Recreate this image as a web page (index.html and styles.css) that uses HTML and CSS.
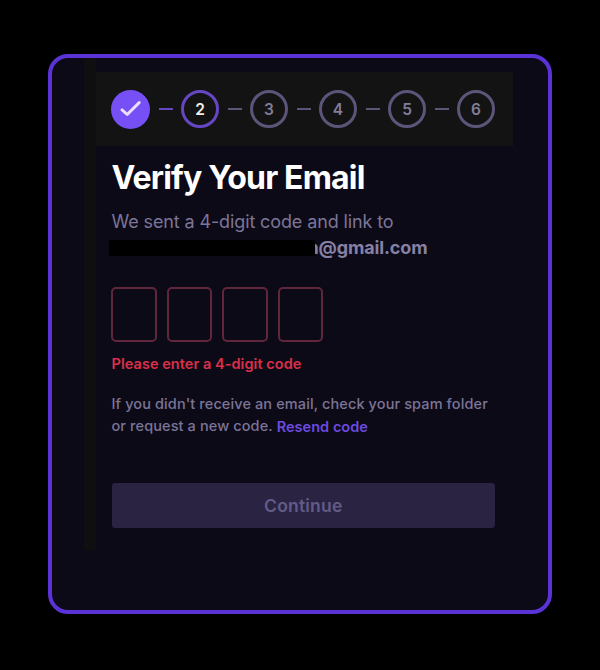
FILE: index.html
```html
<!DOCTYPE html>
<html lang="en">
<head>
<meta charset="utf-8">
<title>Verify Your Email</title>
<link rel="stylesheet" href="styles.css">
</head>
<body>
<main class="card">
  <div class="panel">
    <ol class="steps">
      <li class="step done"><svg viewBox="0 0 38 38" width="38" height="38" aria-hidden="true"><path d="M10 19.9 L15.2 24.5 L27.2 12.6"/></svg></li>
      <li class="dash active"></li>
      <li class="step current">2</li>
      <li class="dash"></li>
      <li class="step">3</li>
      <li class="dash"></li>
      <li class="step">4</li>
      <li class="dash"></li>
      <li class="step">5</li>
      <li class="dash"></li>
      <li class="step">6</li>
    </ol>
    <section class="content">
      <h1>Verify Your Email</h1>
      <p class="lead">We sent a 4-digit code and link to</p>
      <p class="address"><span class="redacted"></span><strong>n@gmail.com</strong></p>
      <div class="code"><span></span><span></span><span></span><span></span></div>
      <p class="error">Please enter a 4-digit code</p>
      <p class="help">If you didn't receive an email, check your spam folder<br>or request a new code. <a class="resend">Resend code</a></p>
      <button class="continue" disabled>Continue</button>
    </section>
  </div>
</main>
</body>
</html>
```
FILE: styles.css
```css
* { box-sizing: border-box; margin: 0; padding: 0; }
body {
  width: 600px;
  height: 670px;
  padding: 54px 48px;
  background: #000;
  font-family: Inter, "Liberation Sans", sans-serif;
  color: #7b7598;
}
.card {
  width: 504px;
  height: 560px;
  padding-left: 32px;
  border: 4px solid #5a33d6;
  border-radius: 20px;
  background: #0d0a17;
}
.panel {
  width: 429px;
  height: 492px;
  padding-top: 14px;
  border-left: 12px solid #0f0f11;
}
.steps {
  display: flex;
  align-items: center;
  justify-content: space-between;
  height: 74px;
  padding: 0 18px 0 15px;
  background: #131313;
  list-style: none;
}
.step {
  display: flex;
  align-items: center;
  justify-content: center;
  width: 38px;
  height: 38px;
  border: 3px solid #5c5579;
  border-radius: 50%;
  font-size: 15.5px;
  font-weight: 600;
  color: #827d98;
}
.step.done { width: 39px; height: 39px; border: 0; background: #7650f4; }
.step.done path {
  fill: none;
  stroke: #eadfff;
  stroke-width: 3;
  stroke-linecap: round;
  stroke-linejoin: round;
}
.step.current { border-color: #6547c4; color: #f1efe8; }
.dash { width: 14px; height: 2px; background: #5c5579; }
.dash.active { background: #6547c4; }
.content { padding: 12px 18px 0 15.5px; }
h1 {
  height: 40px;
  font-size: 32px;
  font-weight: 700;
  line-height: 40px;
  letter-spacing: -0.83px;
  color: #fff;
  white-space: nowrap;
}
.lead {
  margin-top: 11px;
  font-size: 18px;
  line-height: 26px;
  letter-spacing: -0.12px;
  white-space: nowrap;
}
.address {
  display: flex;
  align-items: center;
  height: 26px;
  font-size: 18px;
  line-height: 26px;
  letter-spacing: -0.15px;
  color: #8680a5;
}
.address strong { font-weight: 700; margin-left: -7.5px; }
.redacted {
  position: relative;
  z-index: 1;
  width: 206px;
  height: 16px;
  margin-left: -2.5px;
  background: #000;
}
.code { display: flex; gap: 10px; margin: 26px 0 0 -0.5px; }
.code span {
  width: 45.5px;
  height: 55px;
  border: 2px solid #60273c;
  border-radius: 5px;
}
.error {
  margin-top: 12px;
  font-size: 14.5px;
  font-weight: 600;
  line-height: 20px;
  letter-spacing: 0.05px;
  color: #d9304b;
}
.help {
  margin-top: 19px;
  font-size: 14.5px;
  font-weight: 500;
  line-height: 22px;
  letter-spacing: 0.11px;
  white-space: nowrap;
}
.resend {
  position: relative;
  top: 1px;
  font-weight: 600;
  letter-spacing: 0.04px;
  color: #6b4be0;
}
.continue {
  display: block;
  width: 383.5px;
  height: 45px;
  margin-top: 46px;
  border: 0;
  border-radius: 3px;
  background: #2a2342;
  font: 600 17.5px/45px Inter, "Liberation Sans", sans-serif;
  letter-spacing: 0.2px;
  color: #625b88;
}
```
